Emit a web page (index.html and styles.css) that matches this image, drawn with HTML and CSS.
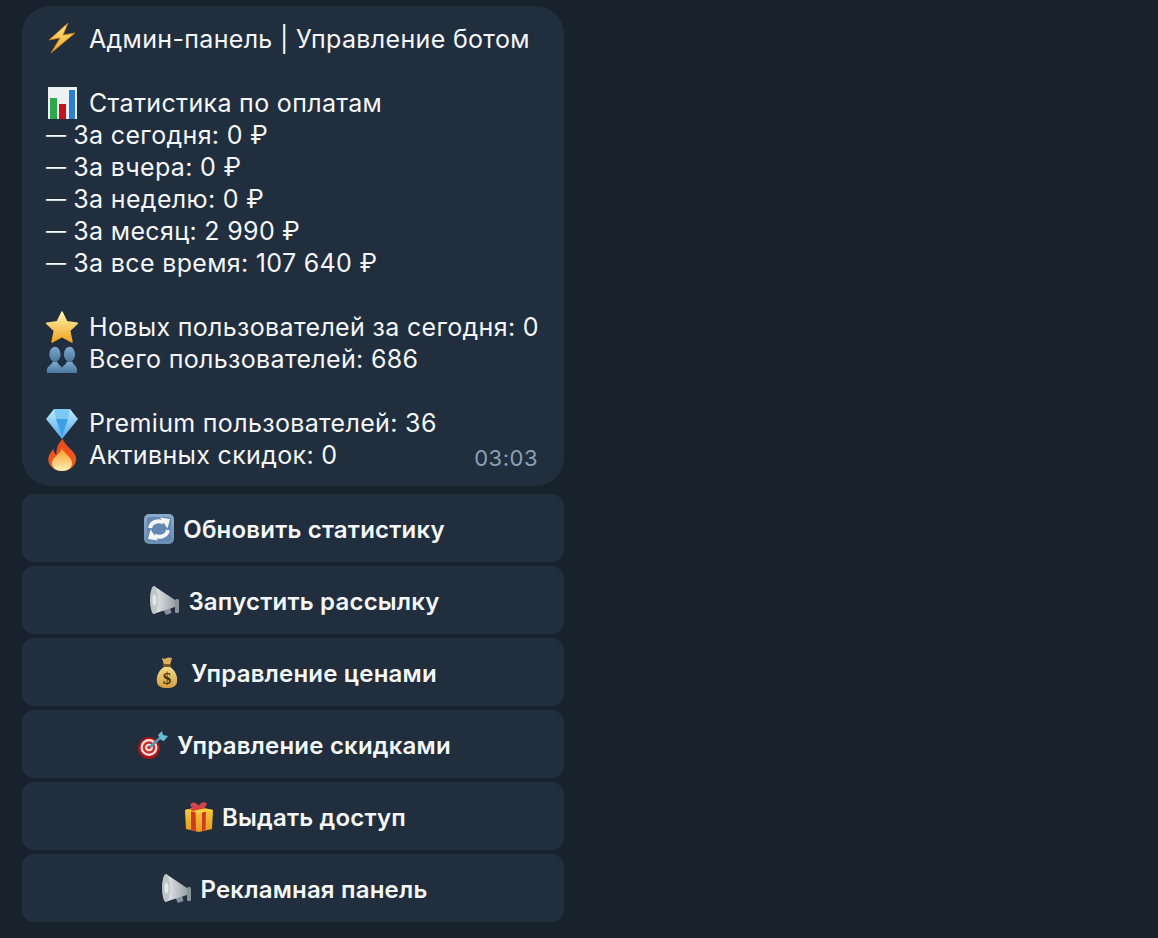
FILE: index.html
```html
<!DOCTYPE html>
<html lang="ru">
<head>
    <meta charset="utf-8">
    <title>Админ-панель</title>
    <link rel="stylesheet" href="styles.css">
</head>
<body>
    <svg class="sprites" xmlns="http://www.w3.org/2000/svg">
        <defs>
            <linearGradient id="gBolt" x1="0" y1="0" x2="0" y2="1"><stop offset="0" stop-color="#ffe98a"/><stop offset="1" stop-color="#f5a623"/></linearGradient>
            <linearGradient id="gStar" x1="0" y1="0" x2="0" y2="1"><stop offset="0" stop-color="#fff4b0"/><stop offset="1" stop-color="#f2a51e"/></linearGradient>
            <linearGradient id="gBust" x1="0" y1="0" x2="0" y2="1"><stop offset="0" stop-color="#7fa9cd"/><stop offset="1" stop-color="#4a78a0"/></linearGradient>
            <linearGradient id="gGem" x1="0" y1="0" x2="0" y2="1"><stop offset="0" stop-color="#c2ecfc"/><stop offset="1" stop-color="#4ba8e8"/></linearGradient>
            <linearGradient id="gFire" x1="0" y1="0" x2="0" y2="1"><stop offset="0" stop-color="#e8481f"/><stop offset="1" stop-color="#f0601e"/></linearGradient>
            <linearGradient id="gFlame" x1="0" y1="0" x2="0" y2="1"><stop offset="0" stop-color="#ff9a22"/><stop offset="1" stop-color="#fff0b8"/></linearGradient>
            <linearGradient id="gTile" x1="0" y1="0" x2="0" y2="1"><stop offset="0" stop-color="#8aaad0"/><stop offset="1" stop-color="#6a8db4"/></linearGradient>
            <linearGradient id="gHorn" x1="0" y1="0" x2="1" y2="0"><stop offset="0" stop-color="#eceeef"/><stop offset="1" stop-color="#9aa2a9"/></linearGradient>
            <linearGradient id="gBag" x1="0" y1="0" x2="0" y2="1"><stop offset="0" stop-color="#f4d888"/><stop offset="1" stop-color="#d0a040"/></linearGradient>
            <linearGradient id="gBox" x1="0" y1="0" x2="0" y2="1"><stop offset="0" stop-color="#f8cc3c"/><stop offset="1" stop-color="#e89a1c"/></linearGradient>
            <symbol id="iBolt" viewBox="0 0 32 32">
                <path d="M22 0 3 17l11-2L5 30l24-20-12 2z" fill="url(#gBolt)" stroke="#c9791a" stroke-width=".8" stroke-linejoin="round"/>
            </symbol>
            <symbol id="iChart" viewBox="0 0 32 32">
                <rect x="2" y="0" width="29" height="32" fill="#eef1f4"/>
                <rect x="4" y="11" width="7" height="21" fill="#2ea84a"/>
                <rect x="13" y="17" width="7" height="15" fill="#c4161c"/>
                <rect x="23" y="3" width="6" height="29" fill="#2a7fd6"/>
            </symbol>
            <symbol id="iStar" viewBox="0 0 32 32">
                <path d="M16 1l4.800 9.800 10.700 1.500-7.900 7.300L26 31l-10-5.500L6 31l2.400-11.400-7.900-7.300 10.700-1.500z" fill="url(#gStar)" stroke="url(#gStar)" stroke-width="1.500" stroke-linejoin="round"/>
            </symbol>
            <symbol id="iBusts" viewBox="0 0 34 32">
                <g fill="url(#gBust)">
                    <ellipse cx="9.500" cy="11" rx="6" ry="8"/>
                    <ellipse cx="25" cy="11" rx="6" ry="8"/>
                    <path d="M1 31v-3c0-5 5-5 6-9h5c1 4 5 4 5 7 0-3 4-3 5-7h6c1 4 5 4 5 9v3z"/>
                </g>
            </symbol>
            <symbol id="iGem" viewBox="0 0 32 32">
                <path d="M8 2h16l8 10-16 20L0 12z" fill="url(#gGem)"/>
                <path d="M10 12h12l-6 17z" fill="#3f9fe6"/>
                <path d="M8 2h16l-2 10H10z" fill="#7cc8f4"/>
            </symbol>
            <symbol id="iFire" viewBox="0 0 32 32">
                <path d="M17 0c1 6 11 11 13 18 1.500 8-6 14-14 14S1 26 2.500 18.500C3 15 6 12 7.500 9.500c0 3 1 5 3 6.500C10 10 12 4 17 0z" fill="url(#gFire)"/>
                <path d="M16 9c1 5 10 9 10 15 0 5-4 8-10 8S6 29 6 24c0-6 9-9 10-15z" fill="url(#gFlame)"/>
            </symbol>
            <symbol id="iRefresh" viewBox="0 0 32 32">
                <rect x="1" y="1" width="30" height="30" rx="5" fill="url(#gTile)"/>
                <rect x="4" y="4" width="24" height="24" rx="3" fill="#6488b2"/>
                <path d="M7 15c1-6 8-8.500 13.500-5.500" fill="none" stroke="#f4f6f8" stroke-width="4"/>
                <path d="M25 17c-1 6-8 8.500-13.500 5.500" fill="none" stroke="#f4f6f8" stroke-width="4"/>
                <path d="M17 4.500 27 6l-2.500 9.500zM15 27.500 5 26l2.500-9.500z" fill="#f4f6f8"/>
            </symbol>
            <symbol id="iHorn" viewBox="0 0 32 32">
                <path d="M15 24l3 6 5.500-2-2-8z" fill="#87909a"/>
                <rect x="27" y="14" width="4" height="14" rx="1.500" fill="#8a949d"/>
                <path d="M6 1 27 15v7L5 29z" fill="url(#gHorn)"/>
                <ellipse cx="6" cy="15" rx="4" ry="14" fill="#bfc4c8"/>
                <ellipse cx="6.500" cy="15" rx="2" ry="5.500" fill="#e6e8ea"/>
            </symbol>
            <symbol id="iBag" viewBox="0 0 32 32">
                <path d="M11 1c2 1 3 1 5 0s3 0 5 0l-2 7h-6z" fill="#dcb058"/>
                <rect x="12" y="7" width="8" height="3" rx="1.500" fill="#7a5a22"/>
                <path d="M13 10c-5 3-8 9-7 15 .5 4 4 6 10 6s9.500-2 10-6c1-6-2-12-7-15z" fill="url(#gBag)"/>
                <text class="bag-sign" x="16" y="27" text-anchor="middle">$</text>
            </symbol>
            <symbol id="iDart" viewBox="0 0 32 32">
                <circle cx="12" cy="19" r="11" fill="#a8141a"/>
                <circle cx="12" cy="18.500" r="8.500" fill="#f4e4de"/>
                <circle cx="12" cy="18.500" r="6.200" fill="#cc2a2c"/>
                <circle cx="12" cy="18.500" r="3.800" fill="#f4e4de"/>
                <circle cx="12" cy="18.500" r="1.800" fill="#cc2a2c"/>
                <path d="M13 18 24 8" stroke="#4f9aac" stroke-width="2.600"/>
                <path d="M21 6l4-4 1 4 5 1-4 5-3-1z" fill="#66bcd0"/>
            </symbol>
            <symbol id="iGift" viewBox="0 0 32 32">
                <path d="M3 9 16 6l15 3-1 19-13 3-13-3z" fill="url(#gBox)"/>
                <path d="M9 8h4.500l.5 22.500-5-1.500z" fill="#d0382a"/>
                <path d="M20 7h4l-.5 22-3.500 1z" fill="#d0382a"/>
                <path d="M3 9 16 6l15 3-13 3z" fill="#f7d040"/>
                <path d="M7 8l13-3 4 2-13 3z" fill="#d84030"/>
                <path d="M16 7C11 8 7 6 9 2.500 11 .5 15 2 16.500 5 18 2 22 0 24.500 2 26 5 21 8 16 7z" fill="#d8444a"/>
            </symbol>
        </defs>
    </svg>

    <div class="chat">
        <div class="bubble">
            <div class="line"><svg class="emoji"><use href="#iBolt"/></svg>Админ-панель | Управление ботом</div>
            <div class="line"></div>
            <div class="line"><svg class="emoji"><use href="#iChart"/></svg>Статистика по оплатам</div>
            <div class="line"><span class="dash">—</span>За сегодня: 0 ₽</div>
            <div class="line"><span class="dash">—</span>За вчера: 0 ₽</div>
            <div class="line"><span class="dash">—</span>За неделю: 0 ₽</div>
            <div class="line"><span class="dash">—</span>За месяц: 2 990 ₽</div>
            <div class="line"><span class="dash">—</span>За все время: 107 640 ₽</div>
            <div class="line"></div>
            <div class="line"><svg class="emoji"><use href="#iStar"/></svg>Новых пользователей за сегодня: 0</div>
            <div class="line"><svg class="emoji"><use href="#iBusts"/></svg>Всего пользователей: 686</div>
            <div class="line"></div>
            <div class="line"><svg class="emoji"><use href="#iGem"/></svg>Premium пользователей: 36</div>
            <div class="line"><svg class="emoji"><use href="#iFire"/></svg>Активных скидок: 0<span class="time">03:03</span></div>
        </div>

        <div class="keyboard">
            <div class="btn"><svg class="emoji"><use href="#iRefresh"/></svg>Обновить статистику</div>
            <div class="btn"><svg class="emoji"><use href="#iHorn"/></svg>Запустить рассылку</div>
            <div class="btn"><svg class="emoji"><use href="#iBag"/></svg>Управление ценами</div>
            <div class="btn"><svg class="emoji"><use href="#iDart"/></svg>Управление скидками</div>
            <div class="btn"><svg class="emoji"><use href="#iGift"/></svg>Выдать доступ</div>
            <div class="btn"><svg class="emoji"><use href="#iHorn"/></svg>Рекламная панель</div>
        </div>
    </div>
</body>
</html>
```

FILE: styles.css
```css
html, body{
    margin: 0;
    padding: 0;
    height: 100%;
    overflow: hidden;
    background-color: #18222d;
}
body{
    font-family: "Inter", "Noto Sans", sans-serif;
    color: #f5f7f9;
}
/* display:none would kill the gradients */
.sprites{
    display: block;
    width: 0;
    height: 0;
}
.chat{
    width: 542px;
    margin-left: 22px;
    padding-top: 6px;
}
.bubble{
    padding: 17px 26px 15px 24px;
    border-radius: 28px;
    background-color: #202e3e;
    font-size: 25px;
    letter-spacing: 0.33px;
}
.line{
    display: flex;
    align-items: center;
    height: 32px;
    white-space: nowrap;
}
.line .emoji{
    margin-right: 11px;
}
.dash{
    margin-right: 7px;
    font-size: 20px;
}
.emoji{
    flex: none;
    width: 32px;
    height: 32px;
}
.time{
    margin-left: auto;
    padding-top: 6px;
    font-size: 22px;
    letter-spacing: 0.5px;
    color: #8ca0b3;
}
.keyboard{
    display: flex;
    flex-direction: column;
    gap: 4px;
    margin-top: 8px;
}
.btn{
    display: flex;
    justify-content: center;
    align-items: center;
    height: 66px;
    padding: 2px 0 0 2px;
    border-radius: 12px;
    background-color: #202e3e;
    font-size: 24px;
    font-weight: 600;
    letter-spacing: 0.2px;
}
.btn .emoji{
    margin-right: 8px;
}
.bag-sign{
    font-family: "Liberation Serif", serif;
    font-size: 17px;
    font-weight: 700;
    fill: #4a3208;
}
```
